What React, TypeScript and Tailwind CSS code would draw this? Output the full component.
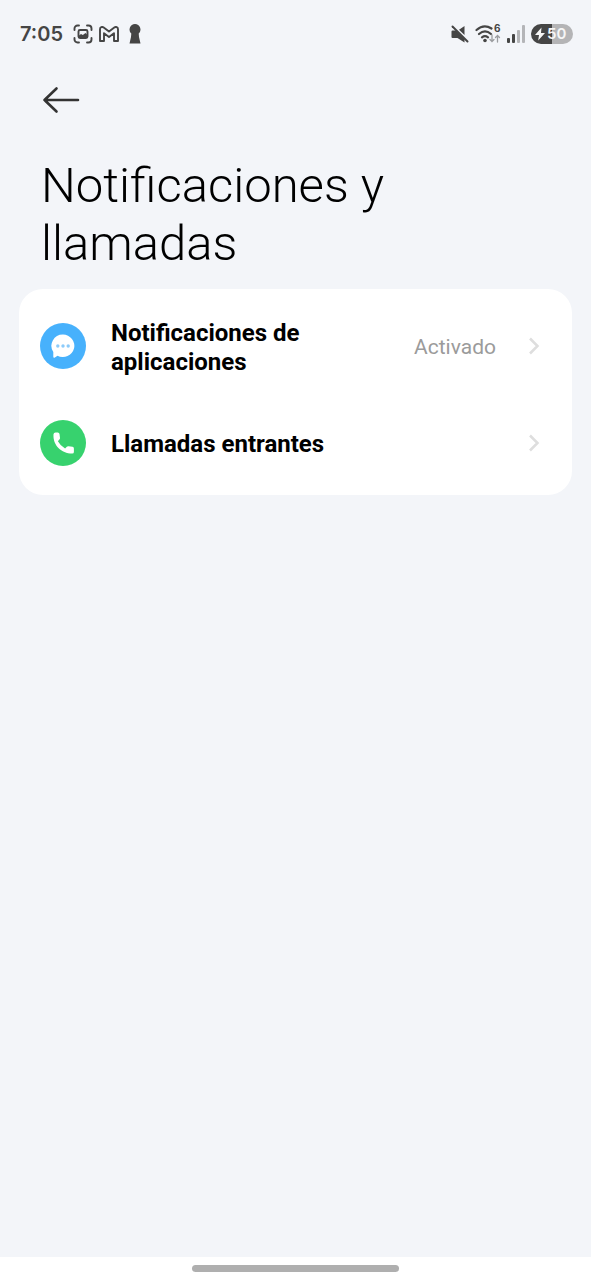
import React from 'react';

const CaptureIcon = () => (
  <svg className="w-5 h-5" viewBox="0 0 20 20" fill="none" stroke="currentColor" strokeWidth="1.900" strokeLinecap="round">
    <path d="M1.500 6V4.500a3 3 0 0 1 3-3H6M14 1.500h1.500a3 3 0 0 1 3 3V6M18.500 14v1.500a3 3 0 0 1-3 3H14M6 18.500H4.500a3 3 0 0 1-3-3V14" />
    <rect x="5.500" y="6" width="9" height="8" rx="1.500" />
    <path d="M6 13v-1.500l2-1.500 1.800 1L12.500 9l1.500 1.500V13z" fill="currentColor" stroke="none" />
  </svg>
);

const MailIcon = () => (
  <svg className="w-5 h-4" viewBox="0 0 20 16" fill="none" stroke="currentColor" strokeWidth="1.900" strokeLinejoin="round">
    <path d="M1 3.200C1 1 3.200.4 4.700 1.500L10 5.600l5.300-4.100C16.800.4 19 1 19 3.200V15h-4V7.200l-5 3.900-5-3.900V15H1z" />
  </svg>
);

const KeyholeIcon = () => (
  <svg className="w-3 h-5" viewBox="0 0 12 20" fill="currentColor">
    <path d="M6 0a5.500 5.500 0 0 1 3.700 9.500L10 13l1.500 6.500H.5L2 13l.3-3.500A5.500 5.500 0 0 1 6 0z" />
  </svg>
);

const MuteIcon = () => (
  <svg className="w-[18px] h-5" viewBox="0 0 18 20" fill="currentColor">
    <path d="M1.500 6.500H5l8.500 8.500v3.500L6.500 14h-5A1 1 0 0 1 .5 13V7.500a1 1 0 0 1 1-1zM13.500 2v9L8 5.700z" />
    <path d="M1.500 2.500l15 15" stroke="currentColor" strokeWidth="2" strokeLinecap="round" />
  </svg>
);

const WifiIcon = () => (
  <svg className="w-[26px] h-6" viewBox="1 -2 26 24" fill="none" stroke="currentColor" strokeWidth="2.200" strokeLinecap="round">
    <path d="M2.500 6C7.500 1.500 13 1.500 17.500 4.500M5 10c3.800-3.300 8.200-3.300 12 0M8 13.300c2-1.600 4-1.600 6 0" />
    <circle cx="11" cy="16.500" r="1.800" fill="currentColor" stroke="none" />
    <path d="M18 11v6.500m-2-2 2 2 2-2M23.500 18v-6.500m-2 2 2-2 2 2" stroke="#9b9da0" strokeWidth="1.300" />
    <text x="20" y="8" fontSize="10" fontWeight="700" fontFamily="Inter, sans-serif" fill="currentColor" stroke="none">6</text>
  </svg>
);

const SignalIcon = () => (
  <svg className="w-[18px] h-5" viewBox="0 0 18 20" fill="currentColor">
    <rect x="0" y="14" width="3" height="5" rx="1" />
    <rect x="5" y="10" width="3" height="9" rx="1" />
    <rect x="10" y="6" width="3" height="13" rx="1" fill="#b4b5b8" />
    <rect x="15" y="1" width="3" height="18" rx="1" fill="#b4b5b8" />
  </svg>
);

const Battery = () => (
  <div className="flex items-center w-[42px] h-5 pl-[3px] rounded-full bg-linear-to-r from-[#454545] from-50% to-[#b4b4b6] to-50% text-[#f6f6f6]">
    <svg className="w-3 h-4" viewBox="0 0 12 16" fill="currentColor">
      <path d="M7.500 1.500L1 9h4l-.8 5.500L11 7H7z" />
    </svg>
    <span className="ml-px text-[15px] leading-5 font-semibold">50</span>
  </div>
);

const BackIcon = () => (
  <svg className="w-10 h-8" viewBox="0 0 40 32" fill="none" stroke="currentColor" strokeWidth="2.600" strokeLinecap="round" strokeLinejoin="round">
    <path d="M16.500 4.500L4.500 16l12 11.500M4.500 16H38" />
  </svg>
);

const ChatIcon = () => (
  <svg className="w-6 h-6" viewBox="0 0 24 24">
    <path d="M12 .5a11.500 11.300 0 1 1-5.500 21.300L3.500 23.700q-1.200.3-1.200-1V18A11.500 11.300 0 0 1 12 .5z" fill="#fff" />
    <g fill="#8ccbfa">
      <circle cx="6.800" cy="12" r="1.700" />
      <circle cx="12" cy="12" r="1.700" />
      <circle cx="17.200" cy="12" r="1.700" />
    </g>
  </svg>
);

const PhoneIcon = () => (
  <svg className="w-6 h-6" viewBox="0 0 24 24" fill="#fff">
    <path d="M4.500 1.500h2.300q1.500 0 1.700 1.500l.5 4q.1 1-.7 1.600L6.900 10.200q2.500 4.700 7.200 7.200l1.700-1.700q.7-.7 1.700-.5l4 .6q1.400.2 1.400 1.600v3.500q0 1.600-1.600 1.600C10.500 22.600 1.700 14.200 2.500 3.200Q2.700 1.500 4.500 1.500z" />
  </svg>
);

const ChevronIcon = () => (
  <svg className="w-3 h-5 shrink-0" viewBox="0 0 12 20" fill="none" stroke="#dedede" strokeWidth="2.500">
    <path d="M2 2.500L9.500 10 2 17.500" />
  </svg>
);

type RowProps = {
  icon: React.ReactNode;
  color: string;
  label: string;
  value?: string;
};

const SettingsRow: React.FC<RowProps> = ({ icon, color, label, value }) => (
  <button className="flex items-center w-full min-h-[97px] pl-[21px] pr-8 text-left">
    <span className={`flex items-center justify-center size-[46px] shrink-0 rounded-full ${color}`}>{icon}</span>
    <span className="flex-1 ml-[25px] pt-1 pr-16 text-2xl leading-[29px] font-bold text-black">{label}</span>
    {value && <span className="mr-8 pt-[2px] text-[21px] leading-7 text-[#9b9b9b]">{value}</span>}
    <ChevronIcon />
  </button>
);

export default function App() {
  return (
    <div className="flex flex-col min-h-screen bg-[#f3f5f9] font-['Roboto',sans-serif]">
      <header className="flex items-center justify-between pt-5 pl-5 pr-[18px] text-[#454545] font-['Inter',sans-serif]">
        <div className="flex items-center h-7">
          <span className="mr-[10px] text-xl leading-7 font-semibold">7:05</span>
          <div className="flex items-center gap-[6px]">
            <CaptureIcon />
            <MailIcon />
            <div className="ml-1"><KeyholeIcon /></div>
          </div>
        </div>
        <div className="flex items-center gap-[6px] h-7">
          <MuteIcon />
          <WifiIcon />
          <SignalIcon />
          <Battery />
        </div>
      </header>

      <main className="flex-1 px-[19px]">
        <button aria-label="Atrás" className="block mt-9 ml-[21px] text-[#333]">
          <BackIcon />
        </button>
        <h1 className="mt-[41px] ml-[22px] mr-32 text-[49px] leading-[58px] font-light text-black">
          Notificaciones y llamadas
        </h1>
        <section className="mt-4 pt-2 pb-1 rounded-3xl bg-white">
          <SettingsRow icon={<ChatIcon />} color="bg-[#47b1fc]" label="Notificaciones de aplicaciones" value="Activado" />
          <SettingsRow icon={<PhoneIcon />} color="bg-[#37d26e]" label="Llamadas entrantes" />
        </section>
      </main>

      <footer className="flex justify-center pt-2 pb-2 bg-white">
        <div className="w-[35%] h-[7px] rounded-full bg-[#afafaf]" />
      </footer>
    </div>
  );
}
